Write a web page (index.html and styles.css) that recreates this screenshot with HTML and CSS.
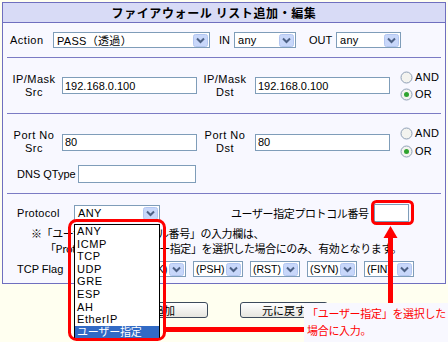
FILE: index.html
```html
<!DOCTYPE html>
<html lang="ja">
<head>
    <meta charset="UTF-8">
    <title>ファイアウォール リスト追加・編集</title>
    <link rel="stylesheet" href="styles.css">
</head>
<body>
<div class="page">

    <div class="panel">
        <div class="panel-title">ファイアウォール リスト追加・編集</div>

        <div class="sec sec-action">
            <span class="lbl lbl-action">Action</span>
            <div class="sel sel-action"><span class="sel-val">PASS（透過）</span><span class="sel-btn"><svg width="15" height="13" viewBox="0 0 15 13"><rect x="0.5" y="0.5" width="14" height="12" rx="2" fill="#c8d7fa" stroke="#b3c6f0"/><path d="M4 4.5 L7.5 8 L11 4.5" fill="none" stroke="#4d6185" stroke-width="2"/></svg></span></div>
            <span class="lbl lbl-in">IN</span>
            <div class="sel sel-in"><span class="sel-val">any</span><span class="sel-btn"><svg width="15" height="13" viewBox="0 0 15 13"><rect x="0.5" y="0.5" width="14" height="12" rx="2" fill="#c8d7fa" stroke="#b3c6f0"/><path d="M4 4.5 L7.5 8 L11 4.5" fill="none" stroke="#4d6185" stroke-width="2"/></svg></span></div>
            <span class="lbl lbl-out">OUT</span>
            <div class="sel sel-out"><span class="sel-val">any</span><span class="sel-btn"><svg width="15" height="13" viewBox="0 0 15 13"><rect x="0.5" y="0.5" width="14" height="12" rx="2" fill="#c8d7fa" stroke="#b3c6f0"/><path d="M4 4.5 L7.5 8 L11 4.5" fill="none" stroke="#4d6185" stroke-width="2"/></svg></span></div>
        </div>

        <div class="rule"></div>

        <div class="sec sec-ip">
            <div class="lbl2">IP/Mask<br>Src</div>
            <input class="field field-wide" type="text" value="192.168.0.100">
            <div class="lbl2 lbl2-dst">IP/Mask<br>Dst</div>
            <input class="field field-wide" type="text" value="192.168.0.100">
            <div class="radios">
                <div class="radio"><svg width="13" height="13" viewBox="0 0 13 13"><circle cx="6.5" cy="6.5" r="5.5" fill="#f3f3ef" stroke="#8e9fb6"/></svg>AND</div>
                <div class="radio"><svg width="13" height="13" viewBox="0 0 13 13"><circle cx="6.5" cy="6.5" r="5.5" fill="#f3f3ef" stroke="#8e9fb6"/><circle cx="6.5" cy="6.5" r="2.5" fill="#2fa32f"/></svg>OR</div>
            </div>
        </div>

        <div class="rule"></div>

        <div class="sec sec-port">
            <div class="port-row">
                <div class="lbl2">Port No<br>Src</div>
                <input class="field field-wide" type="text" value="80">
                <div class="lbl2 lbl2-dst">Port No<br>Dst</div>
                <input class="field field-wide" type="text" value="80">
                <div class="radios radios-port">
                    <div class="radio"><svg width="13" height="13" viewBox="0 0 13 13"><circle cx="6.5" cy="6.5" r="5.5" fill="#f3f3ef" stroke="#8e9fb6"/></svg>AND</div>
                    <div class="radio"><svg width="13" height="13" viewBox="0 0 13 13"><circle cx="6.5" cy="6.5" r="5.5" fill="#f3f3ef" stroke="#8e9fb6"/><circle cx="6.5" cy="6.5" r="2.5" fill="#2fa32f"/></svg>OR</div>
                </div>
            </div>
            <div class="dns-row">
                <span class="lbl lbl-dns">DNS QType</span>
                <input class="field field-dns" type="text" value="">
            </div>
        </div>

        <div class="rule"></div>

        <div class="sec sec-proto">
            <div class="proto-row">
                <span class="lbl lbl-proto">Protocol</span>
                <div class="sel sel-proto">
                    <span class="sel-val">ANY</span><span class="sel-btn"><svg width="15" height="13" viewBox="0 0 15 13"><rect x="0.5" y="0.5" width="14" height="12" rx="2" fill="#c8d7fa" stroke="#b3c6f0"/><path d="M4 4.5 L7.5 8 L11 4.5" fill="none" stroke="#4d6185" stroke-width="2"/></svg></span>
                    <ul class="dropdown">
                        <li>ANY</li>
                        <li>ICMP</li>
                        <li>TCP</li>
                        <li>UDP</li>
                        <li>GRE</li>
                        <li>ESP</li>
                        <li>AH</li>
                        <li>EtherIP</li>
                        <li class="picked">ユーザー指定</li>
                    </ul>
                </div>
                <span class="lbl-user">ユーザー指定プロトコル番号</span>
                <input class="field field-num" type="text" value="">
            </div>
            <p class="note">※「ユーザー指定プロトコル番号」の入力欄は、<br>「Protocol」で「ユーザー指定」を選択した場合にのみ、有効となります。</p>
            <div class="flag-row">
                <span class="lbl lbl-flag">TCP Flag</span>
                <div class="sel sel-flag"><span class="sel-val">(URG)</span><span class="sel-btn"><svg width="15" height="13" viewBox="0 0 15 13"><rect x="0.5" y="0.5" width="14" height="12" rx="2" fill="#c8d7fa" stroke="#b3c6f0"/><path d="M4 4.5 L7.5 8 L11 4.5" fill="none" stroke="#4d6185" stroke-width="2"/></svg></span></div>
                <div class="sel sel-flag"><span class="sel-val">(ACK)</span><span class="sel-btn"><svg width="15" height="13" viewBox="0 0 15 13"><rect x="0.5" y="0.5" width="14" height="12" rx="2" fill="#c8d7fa" stroke="#b3c6f0"/><path d="M4 4.5 L7.5 8 L11 4.5" fill="none" stroke="#4d6185" stroke-width="2"/></svg></span></div>
                <div class="sel sel-flag"><span class="sel-val">(PSH)</span><span class="sel-btn"><svg width="15" height="13" viewBox="0 0 15 13"><rect x="0.5" y="0.5" width="14" height="12" rx="2" fill="#c8d7fa" stroke="#b3c6f0"/><path d="M4 4.5 L7.5 8 L11 4.5" fill="none" stroke="#4d6185" stroke-width="2"/></svg></span></div>
                <div class="sel sel-flag"><span class="sel-val">(RST)</span><span class="sel-btn"><svg width="15" height="13" viewBox="0 0 15 13"><rect x="0.5" y="0.5" width="14" height="12" rx="2" fill="#c8d7fa" stroke="#b3c6f0"/><path d="M4 4.5 L7.5 8 L11 4.5" fill="none" stroke="#4d6185" stroke-width="2"/></svg></span></div>
                <div class="sel sel-flag"><span class="sel-val">(SYN)</span><span class="sel-btn"><svg width="15" height="13" viewBox="0 0 15 13"><rect x="0.5" y="0.5" width="14" height="12" rx="2" fill="#c8d7fa" stroke="#b3c6f0"/><path d="M4 4.5 L7.5 8 L11 4.5" fill="none" stroke="#4d6185" stroke-width="2"/></svg></span></div>
                <div class="sel sel-flag"><span class="sel-val">(FIN)</span><span class="sel-btn"><svg width="15" height="13" viewBox="0 0 15 13"><rect x="0.5" y="0.5" width="14" height="12" rx="2" fill="#c8d7fa" stroke="#b3c6f0"/><path d="M4 4.5 L7.5 8 L11 4.5" fill="none" stroke="#4d6185" stroke-width="2"/></svg></span></div>
            </div>
        </div>
    </div>

    <div class="buttons">
        <button class="btn">追加</button>
        <button class="btn">元に戻す</button>
    </div>

    <!-- red annotation marks -->
    <svg class="marks" width="448" height="342" viewBox="0 0 448 342">
        <rect x="69.5" y="220.5" width="95" height="119" rx="7" fill="none" stroke="#f00" stroke-width="3"/>
        <rect x="372.5" y="201.5" width="40" height="22" rx="4" fill="none" stroke="#f00" stroke-width="3"/>
        <rect x="166" y="327" width="228" height="5" fill="#f00"/>
        <rect x="388" y="235" width="5" height="97" fill="#f00"/>
        <polygon points="390.5,226 383.5,238 397.5,238" fill="#f00"/>
    </svg>

    <div class="callout">「ユーザー指定」を選択した<br>場合に入力。</div>
</div>
</body>
</html>
```

FILE: styles.css
```css
body {
    margin: 0;
    background-color: #fffff0;
    font-family: "Liberation Sans", "Noto Sans CJK JP", sans-serif;
    font-size: 11px;
    color: #000;
}
.page {
    position: relative;
    width: 448px;
    height: 342px;
    padding-top: 2px;
    box-sizing: border-box;
    overflow: hidden;
}
.panel {
    margin-left: 2px;
    width: 444px;
    box-sizing: border-box;
    border: 1px solid #6f6fbf;
    background-color: #f8f8ff;
}
.panel-title {
    height: 19px;
    line-height: 19px;
    padding-right: 20px;
    background-color: #d8dbf6;
    border-bottom: 1px solid #6f6fbf;
    text-align: center;
    font-family: "Noto Sans CJK JP", sans-serif;
    font-weight: bold;
    font-size: 12px;
    letter-spacing: 0.6px;
}
.rule {
    height: 1px;
    margin: 0 4px;
    background-color: #7b7bc4;
}
.sec {
    box-sizing: border-box;
}
.lbl {
    white-space: nowrap;
}
.lbl2 {
    white-space: nowrap;
    letter-spacing: 0.5px;
}

/* selects */
.sel {
    position: relative;
    display: flex;
    align-items: center;
    height: 16px;
    box-sizing: border-box;
    border: 1px solid #7f9db9;
    background-color: #fff;
}
.sel-val {
    flex: 1;
    padding-left: 3px;
    white-space: nowrap;
    overflow: hidden;
    letter-spacing: 0.3px;
}
.sel-btn {
    display: flex;
    margin-right: 1px;
}

/* inputs */
.field {
    box-sizing: border-box;
    height: 17px;
    margin: 0;
    padding: 0 2px;
    border: 1px solid #7f9db9;
    background-color: #fff;
    font-family: "Liberation Sans", sans-serif;
    font-size: 11px;
}

.sec-action {
    display: flex;
    align-items: center;
    height: 34px;
    padding-left: 7px;
}
.lbl-action { width: 43px; letter-spacing: 0.5px; }
.sel-action { width: 157px; }
.lbl-in { margin-left: 9px; width: 15px; }
.sel-in { width: 62px; }
.lbl-out { margin-left: 13px; width: 27px; }
.sel-out { width: 65px; }

.sec-ip,
.port-row {
    display: flex;
    align-items: center;
    padding-left: 5px;
}
.sec-ip { height: 55px; }
.lbl2 {
    width: 52px;
    margin-right: 2px;
    text-align: center;
    line-height: 13px;
}
.lbl2-dst {
    width: 50px;
    margin-left: 3px;
    margin-right: 5px;
}
.field-wide { width: 135px; }
.radios {
    margin-left: 10px;
    display: flex;
    flex-direction: column;
    letter-spacing: 0.3px;
}
.radio {
    display: flex;
    align-items: center;
    gap: 2px;
    height: 17px;
}
.radios-port .radio { height: 18px; }

.sec-port {
    height: 79px;
    padding-top: 12px;
}
.port-row { height: 32px; }
.dns-row {
    display: flex;
    align-items: center;
    height: 20px;
    margin-top: 6px;
    padding-left: 14px;
}
.lbl-dns { width: 61px; }
.field-dns { width: 118px; height: 18px; }

.sec-proto {
    height: 89px;
    padding-top: 9px;
}
.proto-row {
    display: flex;
    align-items: center;
    height: 20px;
    padding-left: 14px;
}
.lbl-proto { width: 57px; letter-spacing: 0.3px; }
.sel-proto { width: 86px; }
.lbl-user {
    width: 143px;
    margin-left: 71px;
    font-family: "Noto Sans CJK JP", sans-serif;
    letter-spacing: -0.4px;
    white-space: nowrap;
}
.field-num { width: 35px; height: 18px; }

.dropdown {
    position: absolute;
    z-index: 2;
    top: 18px;
    left: -1px;
    width: 86px;
    margin: 0;
    padding: 0;
    list-style: none;
    box-sizing: border-box;
    border: 1px solid #000;
    background-color: #fff;
}
.dropdown li {
    height: 12.6px;
    line-height: 12.6px;
    padding-left: 2px;
    font-size: 11px;
    letter-spacing: 0.6px;
}
.dropdown li.picked {
    background-color: #316ac5;
    color: #fff;
    letter-spacing: -0.2px;
}

.note {
    margin: 3px 0 0;
    padding-left: 42px;
    text-indent: -14px;
    line-height: 15px;
    font-family: "Noto Sans CJK JP", sans-serif;
    letter-spacing: -0.4px;
    white-space: nowrap;
}

.flag-row {
    display: flex;
    align-items: center;
    gap: 7px;
    height: 18px;
    margin-top: 4px;
    padding-left: 14px;
}
.lbl-flag { width: 55px; }
.sel-flag { width: 50px; }
.sel-flag .sel-val {
    padding-left: 2px;
    letter-spacing: 0;
    font-size: 10.5px;
}

.buttons {
    display: flex;
    justify-content: center;
    gap: 32px;
    margin-top: 18px;
}
.btn {
    width: 88px;
    height: 16px;
    padding: 0;
    border: 1px solid #3c4a5c;
    border-radius: 3px;
    background: linear-gradient(#ffffff, #e6e5df);
    font-family: "Noto Sans CJK JP", sans-serif;
    font-size: 11px;
    line-height: 14px;
    color: #000;
}

.marks {
    position: absolute;
    z-index: 3;
    top: 0;
    left: 0;
    pointer-events: none;
}
.callout {
    position: absolute;
    z-index: 4;
    left: 304px;
    top: 303px;
    right: 0;
    bottom: 0;
    padding: 2px 0 0 3px;
    background-color: #f8f8ff;
    color: #f00;
    font-family: "Noto Sans CJK JP", sans-serif;
    font-size: 11px;
    line-height: 17px;
    letter-spacing: -0.3px;
    white-space: nowrap;
}
```
